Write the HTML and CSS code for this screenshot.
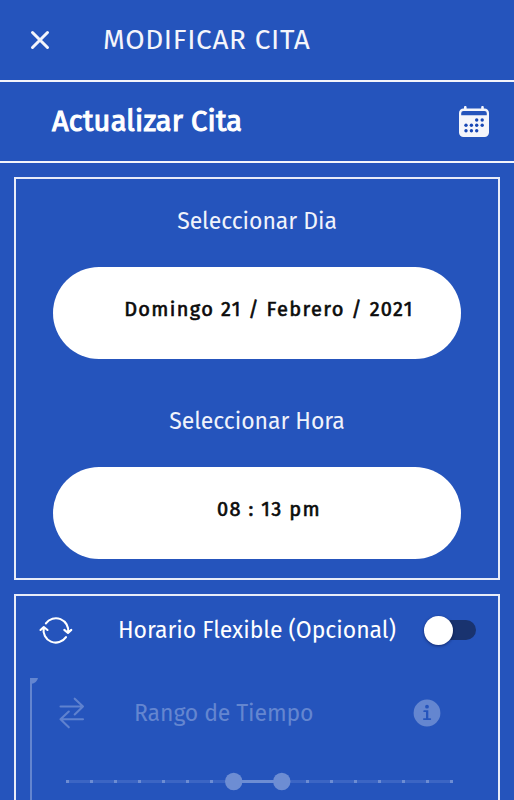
FILE: index.html
```html
<!DOCTYPE html>
<html lang="es">
<head>
    <meta charset="UTF-8">
    <meta name="viewport" content="width=device-width, initial-scale=1.0">
    <title>Modificar Cita</title>
    <link rel="stylesheet" href="styles.css">
</head>
<body>
    <header class="toolbar">
        <svg class="close-icon" width="20" height="20" viewBox="0 0 20 20">
            <path d="M2.500 2.500 L17.500 17.500 M17.500 2.500 L2.500 17.500"/>
        </svg>
        <h1 class="toolbar-title">MODIFICAR CITA</h1>
    </header>

    <div class="subheader">
        <h2 class="subheader-title">Actualizar Cita</h2>
        <svg class="calendar-icon" width="32" height="32" viewBox="0 0 32 32">
            <path class="fill" fill-rule="evenodd" d="M6 2.500 V1.200 a1.300 1.300 0 0 1 2.600 0 V2.500 H23.200 V1.200 a1.300 1.300 0 0 1 2.600 0 V2.500 H26.500 a4.500 4.500 0 0 1 4.500 4.500 V26.500 a4.500 4.500 0 0 1 -4.500 4.500 H5.500 a4.500 4.500 0 0 1 -4.500 -4.500 V7 a4.500 4.500 0 0 1 4.500 -4.500 Z M5.500 5 a2.300 2.300 0 0 0 -2.300 2.300 V9.300 H28.800 V7.300 a2.300 2.300 0 0 0 -2.300 -2.300 Z"/>
            <g class="days">
                <circle cx="18.700" cy="14" r="1.700"/><circle cx="24.200" cy="14" r="1.700"/>
                <circle cx="8" cy="19.300" r="1.700"/><circle cx="13.400" cy="19.300" r="1.700"/><circle cx="18.700" cy="19.300" r="1.700"/><circle cx="24.200" cy="19.300" r="1.700"/>
                <circle cx="8" cy="24.800" r="1.700"/><circle cx="13.400" cy="24.800" r="1.700"/><circle cx="18.700" cy="24.800" r="1.700"/>
            </g>
        </svg>
    </div>

    <main class="content">
        <section class="panel panel-fecha">
            <p class="label label-dia">Seleccionar Dia</p>
            <div class="pill pill-dia"><span>Domingo 21 / Febrero / 2021</span></div>
            <p class="label label-hora">Seleccionar Hora</p>
            <div class="pill pill-hora"><span>08 : 13 pm</span></div>
        </section>

        <section class="panel panel-flexible">
            <div class="row">
                <svg class="sync-icon" width="34" height="30" viewBox="0 0 34 30">
                    <path d="M6.900 8.400 A12.300 12.300 0 0 1 29.100 17.300 M25.300 14.900 L29 17.900 L32.300 14.900 M27 22.200 A12.300 12.300 0 0 1 4.800 12.700 M1.500 15 L4.800 12 L8.500 15"/>
                </svg>
                <span class="row-title">Horario Flexible (Opcional)</span>
                <div class="switch"><span class="switch-thumb"></span></div>
            </div>

            <div class="rango">
                <svg class="corner" width="7" height="6" viewBox="0 0 7 6">
                    <path d="M0 0 H7 Q6 5 0 6 Z"/>
                </svg>
                <div class="rango-row">
                    <svg class="swap-icon" width="26" height="32" viewBox="0 0 26 32">
                        <path d="M1.500 9.500 H24 M15.700 1.700 L24 9.500 L15.700 17.500 M24 22.300 H1.500 M9.800 14.500 L1.500 22.300 L9.800 30.300"/>
                    </svg>
                    <span class="rango-title">Rango de Tiempo</span>
                    <svg class="info-icon" width="28" height="28" viewBox="0 0 28 28">
                        <path fill-rule="evenodd" d="M14 .6 a13.400 13.400 0 1 0 0 26.800 a13.400 13.400 0 1 0 0 -26.800 Z M14 5.800 a1.900 1.900 0 1 1 0 3.800 a1.900 1.900 0 1 1 0 -3.800 Z M11.200 11.300 H15.300 V19.200 H17.300 a.8 .8 0 0 1 0 1.800 H10.900 a.8 .8 0 0 1 0 -1.800 H13 V13.100 H11.200 a.8 .8 0 0 1 0 -1.800 Z"/>
                    </svg>
                </div>
                <svg class="slider" width="390" height="21" viewBox="0 0 390 21">
                    <path class="track" d="M1 10.500 H388"/>
                    <path class="ticks" d="M1 10.500 H388"/>
                    <path class="range" d="M168.500 10.500 H217"/>
                    <circle cx="168.700" cy="10.500" r="8.700"/>
                    <circle cx="216.800" cy="10.500" r="8.700"/>
                </svg>
            </div>
        </section>
    </main>
</body>
</html>
```

FILE: styles.css
```css
* {
    box-sizing: border-box;
}

body {
    margin: 0;
    background: #2554bc;
    color: #fff;
    font-family: 'Fira Sans', 'Noto Sans', sans-serif;
}

h1, h2, p {
    margin: 0;
    font-weight: 400;
    white-space: nowrap;
}

svg {
    display: block;
    flex-shrink: 0;
    fill: none;
}

.toolbar {
    display: flex;
    align-items: center;
    height: 82px;
    padding: 0 30px;
    border-bottom: 2px solid #f4f5fb;
}

.close-icon {
    stroke: #f4f5fb;
    stroke-width: 3;
    stroke-linecap: round;
}

.toolbar-title {
    margin-left: 53px;
    font-size: 28px;
    line-height: 40px;
    letter-spacing: 0.65px;
    color: #f4f5fb;
}

.subheader {
    display: flex;
    align-items: center;
    justify-content: space-between;
    height: 81px;
    padding: 0 24px 0 52px;
    border-bottom: 2px solid #f4f5fb;
}

.subheader-title {
    font-size: 29px;
    line-height: 40px;
    letter-spacing: 0.2px;
    -webkit-text-stroke: 1.1px #fff;
}

.calendar-icon .fill {
    fill: #f4f5fb;
}

.calendar-icon .days {
    fill: #1746b5;
}

.content {
    padding: 14px 14px 0;
}

.panel {
    border: 2px solid #e8ecf8;
}

.panel-fecha {
    height: 403px;
    padding: 24px 37px 0;
}

.label {
    height: 40px;
    font-size: 23px;
    line-height: 36px;
    letter-spacing: -0.05px;
    text-align: center;
    color: #f0f3fb;
}

.label-hora {
    margin-top: 44px;
}

.pill {
    height: 92px;
    margin-top: 24px;
    padding-top: 24px;
    border-radius: 46px;
    background: #fff;
    color: #0b0b0b;
    font-size: 20px;
    line-height: 36px;
    letter-spacing: 1.33px;
    text-align: center;
    white-space: nowrap;
    -webkit-text-stroke: 0.6px #0b0b0b;
}

.pill span {
    margin-left: 24px;
}

.panel-flexible {
    height: 206px;
    margin-top: 14px;
    border-bottom: none;
}

.row {
    display: flex;
    align-items: center;
    height: 68px;
    padding: 0 22px 0 23px;
}

.sync-icon {
    stroke: #fff;
    stroke-width: 2.1;
    stroke-linecap: round;
    stroke-linejoin: round;
}

.row-title {
    width: 278px;
    margin-left: 45px;
    font-size: 23px;
    letter-spacing: -0.04px;
    white-space: nowrap;
}

.switch {
    display: flex;
    align-items: center;
    width: 48px;
    height: 20px;
    margin-left: auto;
    border-radius: 10px;
    background: #19336f;
}

.switch-thumb {
    width: 29px;
    height: 29px;
    margin-left: -4px;
    border-radius: 50%;
    background: #fff;
    box-shadow: 0 1px 3px rgba(0, 0, 40, 0.5);
}

/* disabled until the switch is on */
.rango {
    height: 122px;
    margin: 14px 0 0 14px;
    border-left: 2px solid #6385cf;
    color: #6486d0;
}

.corner {
    fill: #6486d0;
    margin-left: -1px;
}

.rango-row {
    display: flex;
    align-items: center;
    height: 58px;
    padding: 0 57px 0 27px;
}

.swap-icon {
    stroke: #5f82cf;
    stroke-width: 2.1;
    stroke-linecap: round;
    stroke-linejoin: round;
}

.rango-title {
    margin-left: 49px;
    font-size: 23px;
    letter-spacing: -0.1px;
    white-space: nowrap;
}

.info-icon {
    margin-left: auto;
    fill: #6486d0;
}

.slider {
    margin: 29px 0 0 33px;
    fill: #6d8dd3;
}

.slider path {
    stroke-width: 3;
}

.slider .track {
    stroke: #3b65c4;
}

.slider .ticks {
    stroke: #6d8dd3;
    stroke-dasharray: 3 21;
}

.slider .range {
    stroke: #6d8dd3;
}
```
